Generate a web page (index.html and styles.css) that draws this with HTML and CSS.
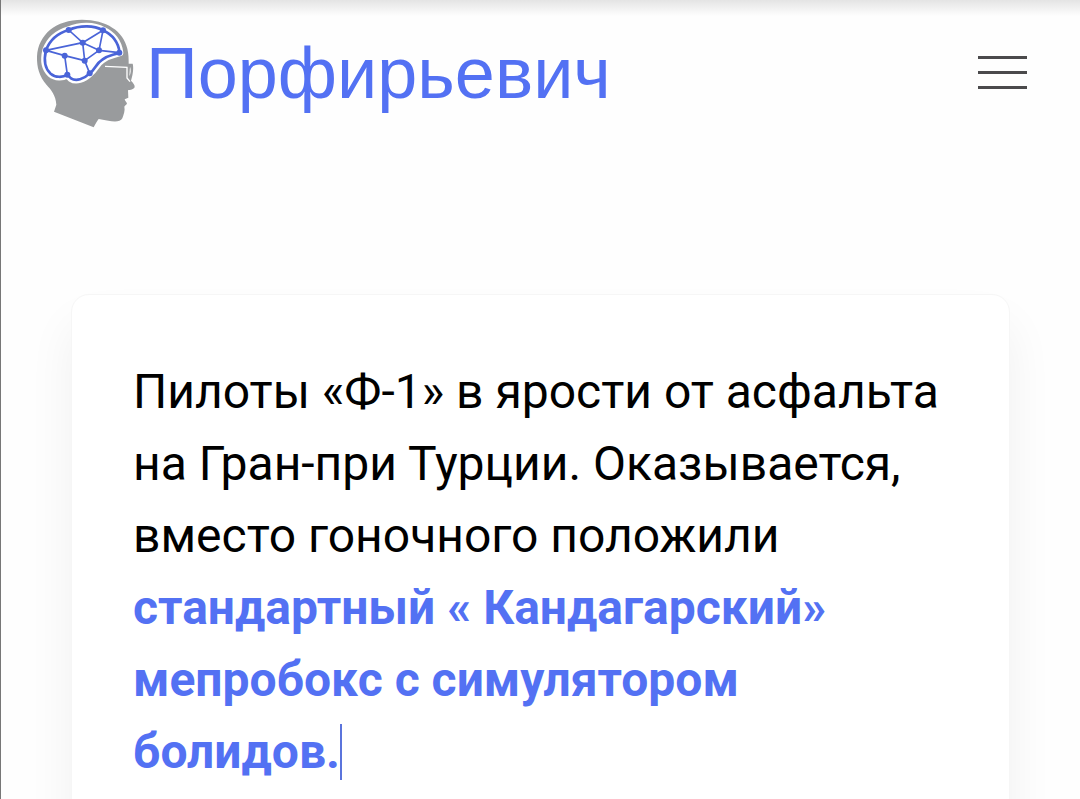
FILE: index.html
```html
<!DOCTYPE html>
<html lang="ru">
<head>
  <meta charset="UTF-8">
  <meta name="viewport" content="width=device-width, initial-scale=1">
  <title>Порфирьевич</title>
  <link rel="stylesheet" href="styles.css">
</head>
<body>
  <header class="header">
    <a href="#" class="logo">
      <svg class="logo-icon" viewBox="33 27 300 327" aria-hidden="true">
        <path fill="#999b9d" d="M87 305 L94 284 C92 256 79 240 65 225 C43 200 35 172 36 139 C40 73 93 29 171 29 C244 29 295 63 307 116 C311 132 311 146 311 161 L323 161 C326 170 325 190 318 212 C324 218 330 225 329 231 C326 239 316 239 309 241 L310 263 L299 268 C300 273 305 276 306 281 C304 285 299 286 298 290 C301 301 296 314 292 325 C286 337 265 335 250 332 L221 327 C216 333 211 343 206 352 Z"/>
        <path fill="#fff" stroke="#fff" stroke-width="22" stroke-linejoin="round" d="M63 121 C74 91 96 70 131 60 C166 45 207 46 234 61 C262 74 280 98 284 128 C260 137 250 135 232 149 C212 161 211 179 194 190 C176 208 153 215 138 205 L127 194 C113 203 91 203 77 191 C57 173 57 146 63 121Z"/>
        <g fill="none" stroke="#4a64d8" stroke-linejoin="round">
          <path stroke-width="8" d="M63 121 C74 91 96 70 131 60 C166 45 207 46 234 61 C262 74 280 98 284 128 C260 137 250 135 232 149 C212 161 211 179 194 190 C176 208 153 215 138 205 L127 194 C113 203 91 203 77 191 C57 173 57 146 63 121Z"/>
          <path stroke-width="5" d="M63 121 L173 98 L131 60 M173 98 L234 61 L222 121 L173 98 L179 152 L222 121 L283 128 M63 121 L119 137 L179 152 L194 190 M119 137 L127 194"/>
        </g>
        <g fill="#4a64d8">
          <circle cx="63" cy="121" r="9"/>
          <circle cx="131" cy="60" r="9"/>
          <circle cx="234" cy="61" r="9"/>
          <circle cx="173" cy="98" r="9"/>
          <circle cx="222" cy="121" r="9"/>
          <circle cx="283" cy="128" r="9"/>
          <circle cx="119" cy="137" r="9"/>
          <circle cx="179" cy="152" r="9"/>
          <circle cx="194" cy="190" r="9"/>
          <circle cx="127" cy="194" r="9"/>
        </g>
        <path fill="none" stroke="#fff" stroke-width="4" d="M240 169 L306 172 V204 L315 215"/>
        <path fill="#fff" d="M315 170 C319 178 317 192 313 199 Z"/>
      </svg>
      <span class="logo-text">Порфирьевич</span>
    </a>
    <button class="menu" type="button" aria-label="Меню">
      <span class="menu-line"></span>
      <span class="menu-line"></span>
      <span class="menu-line"></span>
    </button>
  </header>

  <main class="main">
    <div class="editor" contenteditable="true" role="textbox" aria-multiline="true" aria-label="Текст" spellcheck="false">Пилоты «Ф-1» в ярости от асфальта на Гран-при Турции. Оказывается, вместо гоночного положили <strong class="generated">стандартный « Кандагарский» мепробокс с симулятором болидов.</strong><span class="caret"></span></div>
  </main>
</body>
</html>
```
FILE: styles.css
```css
* { box-sizing: border-box; }
body { margin: 0; height: 100vh; overflow: hidden; border-left: 1px solid #777; background: linear-gradient(#e4e4e4, #fefefe 16px); font-family: Roboto, sans-serif; color: #000; }

.header { display: flex; align-items: flex-start; justify-content: space-between; padding: 19px 53px 0 35px; }
.logo { display: flex; align-items: flex-start; gap: 10px; color: #5371f3; text-decoration: none; }
.logo-icon { width: 100px; height: 109px; }
.logo-text { padding-top: 14px; font-family: "Liberation Sans", Arial, sans-serif; font-size: 72px; line-height: 80px; }
.menu { display: flex; flex-direction: column; gap: 12px; width: 49px; margin-top: 37px; padding: 0; background: none; border: none; cursor: pointer; }
.menu-line { width: 100%; height: 3px; background: #4b4a4c; }

.main { padding: 166px 70px 0; }
.editor { padding: 61px; background: #fff; border: 1px solid #f6f6f6; border-radius: 18px; box-shadow: 0 30px 48px rgba(0, 0, 0, 0.06); font-size: 48px; line-height: 72px; outline: none; }
.generated { color: #5371f3; font-weight: bold; }
.caret { display: inline-block; height: 56px; border-left: 2px solid #5b74dc; vertical-align: text-bottom; }
```
